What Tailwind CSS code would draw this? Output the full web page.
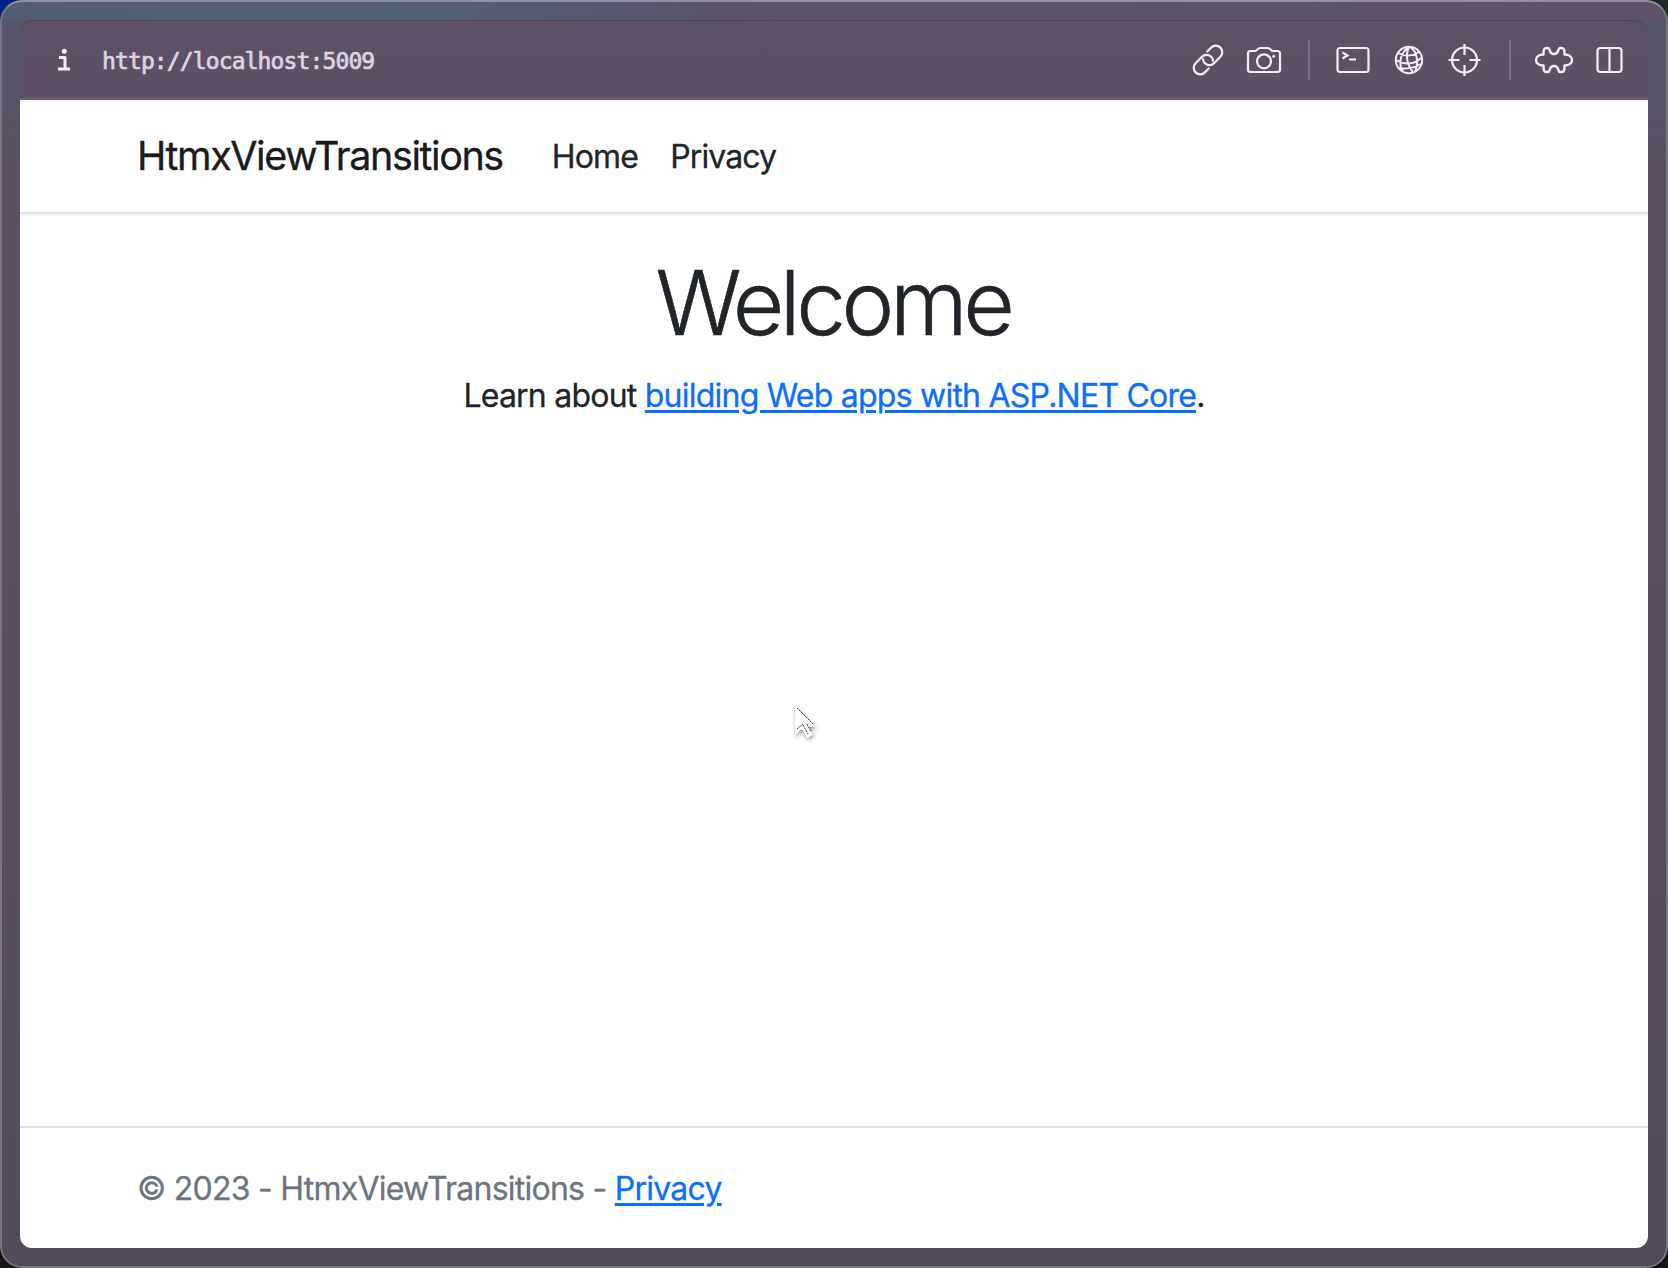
<!DOCTYPE html>
<html lang="en">
<head>
<meta charset="utf-8">
<title>HtmxViewTransitions</title>
<script src="https://cdn.jsdelivr.net/npm/@tailwindcss/browser@4"></script>
</head>
<body class="h-[1268px] w-[1668px] overflow-hidden bg-[linear-gradient(90deg,#00208c_50%,#20282c_50%)] font-['Inter',sans-serif] text-[#212529]">
<div class="h-full bg-[linear-gradient(180deg,transparent_50%,#151515_50%)]">
<div class="relative flex h-full flex-col rounded-[22px] border-2 border-[#787480] border-t-[#92909f] bg-[linear-gradient(90deg,#535d72_0%,#526076_24%,#5c5268_46%,#5d5267_100%)] p-[18px]">
  <div class="absolute inset-x-0 top-[18px] bottom-0 rounded-b-[20px] bg-[linear-gradient(180deg,#56566a_0%,#5b5163_12%,#594f5f_55%,#544b5a_100%)]"></div>
  <header class="relative flex h-20 shrink-0 items-center rounded-t-[14px] border-t border-b-2 border-t-[#50485a] border-b-[#6b5f73] bg-[linear-gradient(180deg,#5d5166,#5d5065)] pr-[18px] pl-[36px] text-[#f5eef8]">
    <svg class="h-6 w-4" viewBox="0 0 16 24" fill="none" stroke="currentColor" stroke-width="3"><circle cx="8.3" cy="3.2" r="2.5" fill="currentColor" stroke="none"/><path d="M3 9.5h6v11M2 21h12" stroke-linejoin="round"/></svg>
    <span class="mt-1 ml-[30px] font-['DejaVu_Sans_Mono',monospace] text-[23px] tracking-[-0.880px] text-[#ddd3e1] [-webkit-text-stroke:0.700px_#ddd3e1]">http://localhost:5009</span>
    <div class="ml-auto flex items-center">
      <svg class="h-10 w-10" viewBox="0 0 40 40" fill="none" stroke="currentColor" stroke-width="2.200" stroke-linecap="round"><g transform="rotate(-45 20 20)"><path d="M14.500 26.500H9a6.500 6.500 0 0 1 0-13h9a6.500 6.500 0 0 1 5 10.600M25.500 13.500H31a6.500 6.500 0 0 1 0 13h-9a6.500 6.500 0 0 1-5-10.600"/></g></svg>
      <svg class="ml-4 h-10 w-10" viewBox="0 0 40 40" fill="none" stroke="currentColor" stroke-width="2.200" stroke-linejoin="round"><path d="M6.500 11h4.500c2 0 3-3 5-3h8c2 0 3 3 5 3h4.500a2.500 2.500 0 0 1 2.500 2.500v16a2.500 2.500 0 0 1-2.500 2.500h-27a2.500 2.500 0 0 1-2.500-2.500v-16a2.500 2.500 0 0 1 2.500-2.500z"/><circle cx="20" cy="21.300" r="7"/><circle cx="29.700" cy="16.300" r="1.500" fill="currentColor" stroke="none"/></svg>
      <i class="ml-6 h-10 w-0.5 bg-[#7b7085]"></i>
      <svg class="ml-[23px] h-10 w-10" viewBox="0 0 40 40" fill="none" stroke="currentColor" stroke-width="2.200"><rect x="4.500" y="8" width="31" height="24" rx="2.500"/><path d="m9.500 12.500 5 3-5 3M16 19.500h7"/></svg>
      <svg class="ml-4 h-10 w-10" viewBox="0 0 40 40" fill="none" stroke="currentColor" stroke-width="2"><circle cx="20" cy="20" r="13.200"/><path d="M20 7C11 13 9 24 14 31.500M20 7c-4 8-2 18 4 25M21 7c7 4 9 15 5 25M9 13c7 4 15 3 21-1M7 20c8 5 18 5 25-2M10 28c7 1 15 0 22-4"/></svg>
      <svg class="ml-4 h-10 w-10" viewBox="0 0 40 40" fill="none" stroke="currentColor" stroke-width="2.200"><circle cx="19.500" cy="20" r="12.500"/><path d="M19.500 4v11M19.500 25v11M3.500 20h11M24.500 20h11"/></svg>
      <i class="ml-6 h-10 w-0.5 bg-[#7b7085]"></i>
      <svg class="ml-[23px] h-10 w-10" viewBox="0 0 40 40" fill="none" stroke="currentColor" stroke-width="2.400" stroke-linejoin="round"><path d="M9.500 14.500c0-4 0-6.500 3-6.500h1.500c2.500 0 .5 6 6 6s3.500-6 6-6H27.500c3 0 3 2.500 3 6.500 5 0 7.500 2.500 7.500 5.500s-2.500 5.500-7.500 5.500c0 4 0 6.500-3 6.500H26c-2.500 0-.5-6-6-6s-3.500 6-6 6h-1.500c-3 0-3-2.500-3-6.500-5 0-7.500-2.500-7.500-5.500s2.500-5.500 7.500-5.500z"/></svg>
      <svg class="ml-4 h-10 w-10" viewBox="0 0 40 40" fill="none" stroke="currentColor" stroke-width="2.200"><rect x="7.500" y="8" width="24" height="24" rx="3"/><path d="M19.500 8v24"/></svg>
    </div>
  </header>
  <div class="relative flex flex-1 flex-col overflow-hidden rounded-b-[12px] bg-white">
    <nav class="flex h-[114px] shrink-0 items-center border-b-2 border-[#dee2e6] px-[117px] pt-[2px] shadow-[0_2px_0_#f5f5f6]">
      <a class="text-[39.500px] tracking-[-1.430px] text-[#1a1b1d] [-webkit-text-stroke:0.3px_#1a1b1d]">HtmxViewTransitions</a>
      <a class="ml-[49px] text-[32px] tracking-[-0.800px] [-webkit-text-stroke:0.3px_#212529]">Home</a>
      <a class="ml-8 text-[32px] tracking-[-0.900px] [-webkit-text-stroke:0.3px_#212529]">Privacy</a>
    </nav>
    <main class="flex flex-1 flex-col items-center pt-[35px]">
      <h1 class="pr-0.5 text-[89px] leading-[107px] font-light tracking-[-4.400px] [-webkit-text-stroke:0.600px_#212529]">Welcome</h1>
      <p class="mt-4 text-[32px] leading-[48px] tracking-[-0.770px] whitespace-nowrap [-webkit-text-stroke:0.3px]">Learn about <a class="text-[#0d6efd] underline decoration-[3px] underline-offset-[3px]">building Web apps with ASP.NET Core</a>.</p>
    </main>
    <footer class="flex h-[122px] shrink-0 items-center border-t-2 border-[#dee2e6] px-[117px] pt-[1px] text-[32px] tracking-[-0.750px] whitespace-pre text-[#6c757d] [-webkit-text-stroke:0.3px]">© 2023 - HtmxViewTransitions - <a class="text-[#0d6efd] underline decoration-[3px] underline-offset-[3px]">Privacy</a></footer>
  </div>
  <svg class="absolute top-[700px] left-[790px] h-[46px] w-[32px] drop-shadow-[1px_2px_2px_#0006]" viewBox="0 0 32 46"><path d="M3 4v29l7-6 5 9 6-3-4-8h7z" fill="#fff"/><path d="m5 6 16 16M5 27l6-5M11 23l5 9M15 22l4 8" fill="none" stroke="#333" stroke-dasharray="2 1"/></svg>
</div>
</div>
</body>
</html>
